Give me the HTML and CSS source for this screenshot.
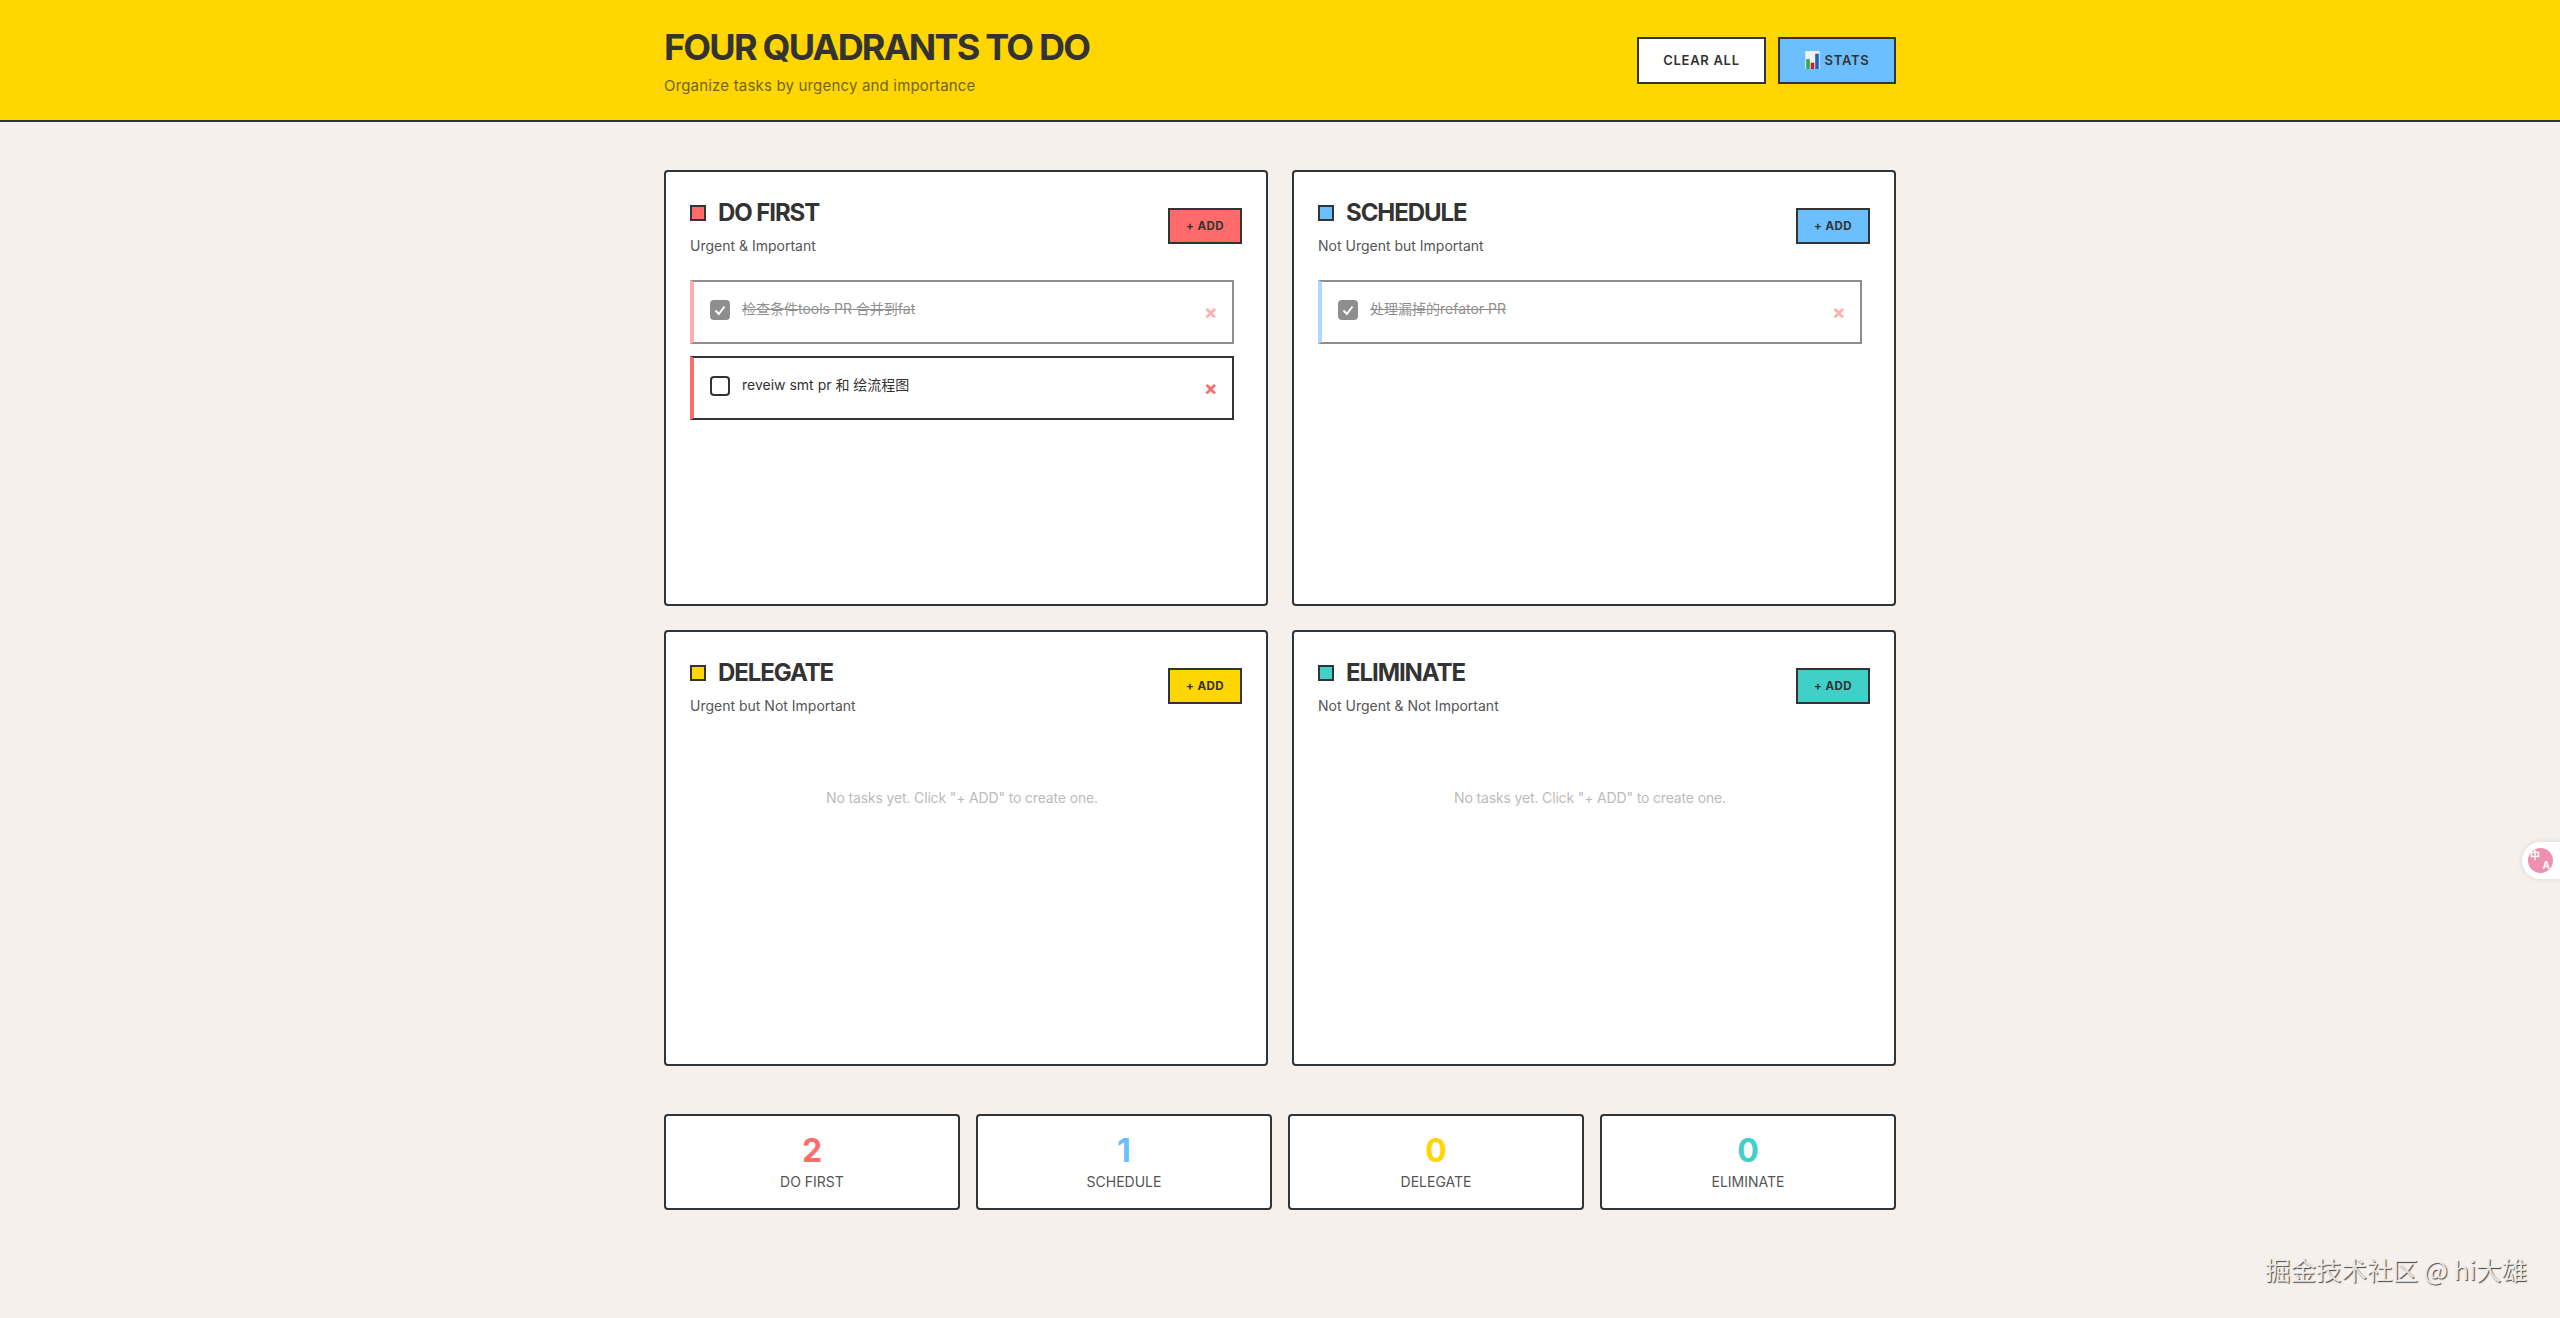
FILE: index.html
```html
<!DOCTYPE html>
<html lang="en">
<head>
<meta charset="utf-8">
<title>Four Quadrants To Do</title>
<link rel="stylesheet" href="styles.css">
</head>
<body>
<header class="header">
  <div class="header-inner">
    <div>
      <h1 class="app-title">FOUR QUADRANTS TO DO</h1>
      <p class="app-sub">Organize tasks by urgency and importance</p>
    </div>
    <div class="header-actions">
      <button class="head-btn btn-clear">CLEAR ALL</button>
      <button class="head-btn btn-stats">
        <svg class="chart-icon" viewBox="0 0 16 20" aria-hidden="true"><rect width="16" height="20" fill="#eef2f5"/><rect x="1" y="9" width="4" height="11" fill="#2fa84f"/><rect x="6" y="13" width="4" height="7" fill="#c8201c"/><rect x="11" y="3" width="4" height="17" fill="#1f5fc4"/></svg>
        STATS
      </button>
    </div>
  </div>
</header>

<main class="main">
  <section class="grid">
    <article class="panel">
      <div class="panel-head">
        <div>
          <h2 class="panel-title"><span class="dot bg-red"></span>DO FIRST</h2>
          <p class="panel-sub">Urgent &amp; Important</p>
        </div>
        <button class="add-btn bg-red">+ ADD</button>
      </div>
      <div class="task-list">
        <div class="task task-done edge-red">
          <span class="check check-on"><svg viewBox="0 0 20 20" aria-hidden="true"><polyline points="5.5,10.5 8.8,14 14.5,6.5"/></svg></span>
          <span class="task-text">检查条件tools PR 合并到fat</span>
          <span class="task-del">×</span>
        </div>
        <div class="task edge-red">
          <span class="check"></span>
          <span class="task-text">reveiw smt pr 和 绘流程图</span>
          <span class="task-del">×</span>
        </div>
      </div>
    </article>

    <article class="panel">
      <div class="panel-head">
        <div>
          <h2 class="panel-title"><span class="dot bg-blue"></span>SCHEDULE</h2>
          <p class="panel-sub">Not Urgent but Important</p>
        </div>
        <button class="add-btn bg-blue">+ ADD</button>
      </div>
      <div class="task-list">
        <div class="task task-done edge-blue">
          <span class="check check-on"><svg viewBox="0 0 20 20" aria-hidden="true"><polyline points="5.5,10.5 8.8,14 14.5,6.5"/></svg></span>
          <span class="task-text">处理漏掉的refator PR</span>
          <span class="task-del">×</span>
        </div>
      </div>
    </article>

    <article class="panel">
      <div class="panel-head">
        <div>
          <h2 class="panel-title"><span class="dot bg-yellow"></span>DELEGATE</h2>
          <p class="panel-sub">Urgent but Not Important</p>
        </div>
        <button class="add-btn bg-yellow">+ ADD</button>
      </div>
      <div class="task-list">
        <p class="empty">No tasks yet. Click "+ ADD" to create one.</p>
      </div>
    </article>

    <article class="panel">
      <div class="panel-head">
        <div>
          <h2 class="panel-title"><span class="dot bg-teal"></span>ELIMINATE</h2>
          <p class="panel-sub">Not Urgent &amp; Not Important</p>
        </div>
        <button class="add-btn bg-teal">+ ADD</button>
      </div>
      <div class="task-list">
        <p class="empty">No tasks yet. Click "+ ADD" to create one.</p>
      </div>
    </article>
  </section>

  <section class="stats">
    <div class="stat"><div class="stat-num c-red">2</div><div class="stat-label">DO FIRST</div></div>
    <div class="stat"><div class="stat-num c-blue">1</div><div class="stat-label">SCHEDULE</div></div>
    <div class="stat"><div class="stat-num c-yellow">0</div><div class="stat-label">DELEGATE</div></div>
    <div class="stat"><div class="stat-num c-teal">0</div><div class="stat-label">ELIMINATE</div></div>
  </section>
</main>

<div class="translate-widget"><span class="translate-badge"><span>中</span><span class="translate-a">A</span></span></div>
<div class="watermark">掘金技术社区 @ hi大雄</div>
</body>
</html>
```

FILE: styles.css
```css
* { box-sizing: border-box; }
html, body { margin: 0; padding: 0; }
body {
  height: 1318px;
  position: relative;
  overflow: hidden;
  background: #f5f0eb;
  color: #333;
  font-family: Inter, "Noto Sans CJK SC", sans-serif;
}
h1, h2, p { margin: 0; }
button { font-family: inherit; color: inherit; cursor: pointer; }

.header { background: #ffd600; border-bottom: 2px solid #333; height: 122px; }
.header-inner {
  max-width: 1280px;
  height: 100%;
  margin: 0 auto;
  padding: 0 24px;
  display: flex;
  align-items: center;
  justify-content: space-between;
}
.app-title { font-size: 36px; line-height: 44px; font-weight: 700; letter-spacing: -1.78px; }
.app-sub { font-size: 15px; line-height: 20px; margin-top: 7px; opacity: .7; letter-spacing: .18px; }
.header-actions { display: flex; gap: 12px; }
.head-btn {
  height: 47px;
  border: 2px solid #333;
  font-size: 13px;
  font-weight: 600;
  letter-spacing: .7px;
  display: flex;
  align-items: center;
  justify-content: center;
  gap: 5px;
}
.btn-clear { width: 129px; background: #fff; }
.btn-stats { width: 118px; background: #6bbfff; }
.chart-icon { width: 15px; height: 18px; }

.main { max-width: 1280px; margin: 0 auto; padding: 48px 24px; }
.grid { display: grid; grid-template-columns: 1fr 1fr; grid-auto-rows: 436px; gap: 24px; }
.panel { background: #fff; border: 2px solid #333; border-radius: 4px; padding: 24px; display: flex; flex-direction: column; }
.panel-head { display: flex; justify-content: space-between; align-items: flex-start; margin-bottom: 24px; }
.panel-title { display: flex; align-items: center; gap: 12px; margin-top: 1px; font-size: 24px; line-height: 32px; font-weight: 700; letter-spacing: -1.08px; }
.panel-sub { font-size: 14px; line-height: 20px; margin-top: 7px; color: #555; }
.dot { width: 16px; height: 16px; border: 2px solid #333; flex: none; }
.add-btn { width: 74px; height: 36px; margin-top: 12px; border: 2px solid #333; font-size: 11.5px; font-weight: 700; letter-spacing: .5px; padding: 0; }
.bg-red { background: #ff6b6b; }
.bg-blue { background: #6bbfff; }
.bg-yellow { background: #ffd600; }
.bg-teal { background: #40d0c8; }
.c-red { color: #ff6b6b; }
.c-blue { color: #6bbfff; }
.c-yellow { color: #ffd600; }
.c-teal { color: #40d0c8; }

.task-list { padding-right: 8px; display: flex; flex-direction: column; gap: 12px; }
.task {
  height: 64px;
  background: #fff;
  border: 2px solid #333;
  border-left-width: 4px;
  padding: 18px 16px;
  display: flex;
  align-items: flex-start;
  gap: 12px;
}
.edge-red { border-left-color: #ff6b6b; }
.edge-blue { border-left-color: #6bbfff; }
.task-done { opacity: .55; }
.task-done .task-text { text-decoration: line-through; }
.check { width: 20px; height: 20px; flex: none; border: 2px solid #333; border-radius: 4px; background: #fff; }
.check-on { background: #333; }
.check-on svg { display: block; width: 20px; height: 20px; margin: -2px; fill: none; stroke: #fff; stroke-width: 2; }
.task-text { flex: 1; font-size: 14px; line-height: 20px; margin-top: -1px; }
.task-del { width: 12px; font-size: 20px; line-height: 20px; margin-top: 2px; font-weight: 700; text-align: center; color: #ff6b6b; }
.empty { padding: 48px 0; font-size: 14px; line-height: 20px; letter-spacing: -.15px; text-align: center; color: #bbb; }

.stats { display: grid; grid-template-columns: repeat(4, 1fr); gap: 16px; margin-top: 48px; }
.stat { height: 96px; background: #fff; border: 2px solid #333; border-radius: 4px; padding-top: 16px; text-align: center; }
.stat-num { font-size: 32px; line-height: 38px; font-weight: 700; }
.stat-label { font-size: 14px; line-height: 20px; margin-top: 2px; color: #555; }

.translate-widget {
  position: absolute;
  right: 0;
  top: 842px;
  width: 38px;
  height: 37px;
  background: #fff;
  border-radius: 19px 0 0 19px;
  box-shadow: 0 0 6px rgba(0,0,0,.1);
  padding: 6px 0 0 6px;
}
.translate-badge {
  position: relative;
  display: block;
  width: 25px;
  height: 25px;
  border-radius: 50%;
  background: #ee8fb0;
  color: #fff;
  font-size: 10px;
  line-height: 12px;
  font-weight: 700;
  padding: 1px 0 0 2px;
}
.translate-a { position: absolute; right: 3px; bottom: 2px; }

.watermark {
  position: absolute;
  right: 33px;
  bottom: 33px;
  font-family: "Noto Sans CJK SC", sans-serif;
  font-size: 25.5px;
  line-height: 32px;
  color: rgba(245,245,245,.9);
  text-shadow: 1px 1px 1px rgba(0,0,0,.7);
  white-space: nowrap;
}
```
